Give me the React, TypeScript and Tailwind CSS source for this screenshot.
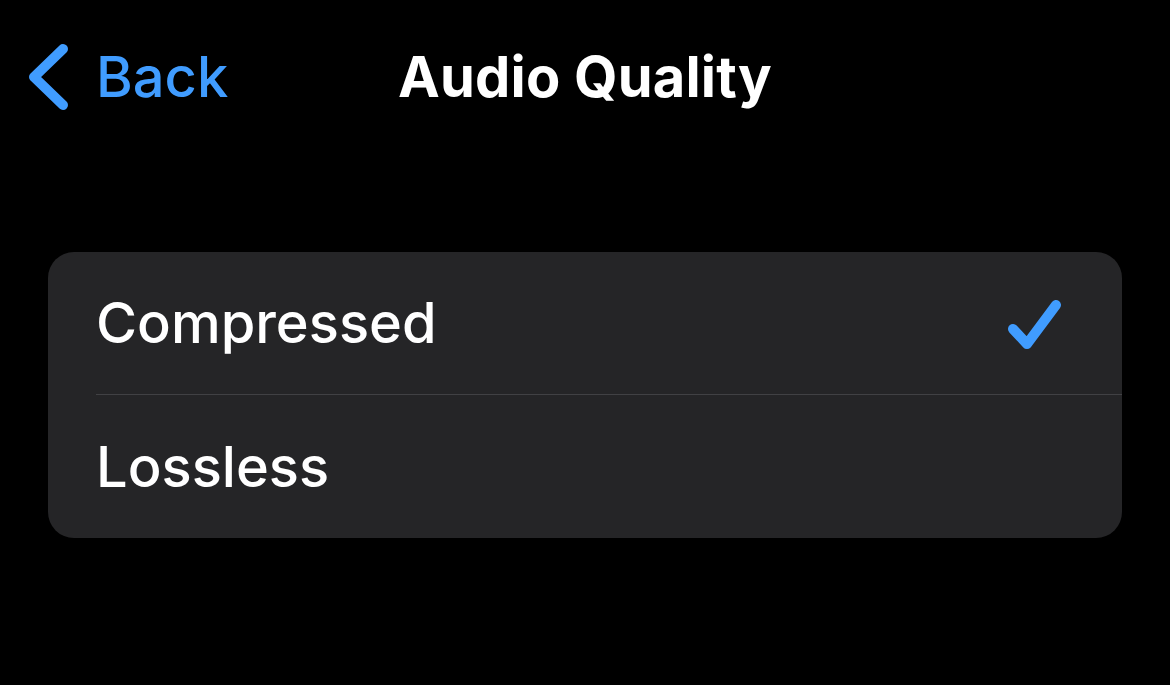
const Chevron = () => (
  <svg width="44" height="66" viewBox="0 0 44 66" fill="none" aria-hidden="true">
    <polyline
      points="37,5 8,33 37,61"
      stroke="#409cff"
      strokeWidth="10"
      strokeLinecap="round"
      strokeLinejoin="round"
    />
  </svg>
);

const Check = () => (
  <svg width="56" height="52" viewBox="0 0 56 52" fill="none" aria-hidden="true">
    <polyline
      points="6,30 20,45 49,6"
      stroke="#409cff"
      strokeWidth="10"
      strokeLinecap="round"
      strokeLinejoin="round"
    />
  </svg>
);

const Header = () => {
  return (
    <div className="grid grid-cols-[1fr_auto_1fr] items-center h-[156px] pb-[2px]">
      <button className="flex items-center gap-[26px] pl-[26px] text-[#409cff] text-[56px] font-[450]">
        <Chevron />
        <span>Back</span>
      </button>
      <h1 className="text-white font-bold text-[56px] tracking-[0.2px]">Audio Quality</h1>
      <div />
    </div>
  );
};

const options = [
  { label: "Compressed", checked: true },
  { label: "Lossless", checked: false },
];

export default function App() {
  return (
    <main className="w-[1170px] h-[685px] bg-black overflow-hidden font-['Inter','Liberation_Sans',sans-serif]">
      <Header />
      <div className="mx-[48px] mt-[96px] rounded-[26px] bg-[#252527] overflow-hidden">
        {options.map((o, i) => (
          <div key={o.label} className="pl-[48px]">
            <div
              className={
                "h-[143px] flex items-center justify-between pr-[59px] " +
                (i < options.length - 1 ? "border-b border-[#414144]" : "")
              }
            >
              <span className="text-white text-[56px] font-[450]">{o.label}</span>
              {o.checked && (
                <span className="translate-y-[2px]">
                  <Check />
                </span>
              )}
            </div>
          </div>
        ))}
      </div>
    </main>
  );
}
